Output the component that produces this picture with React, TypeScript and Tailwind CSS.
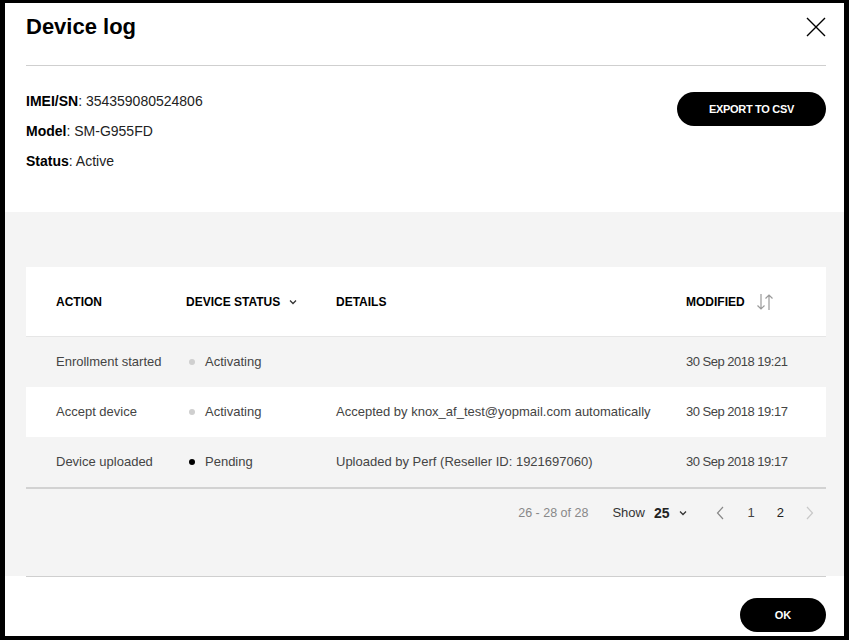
const FONT = { fontFamily: '"Liberation Sans", Arial, sans-serif' };

type Row = {
  action: string;
  status: string;
  pending: boolean;
  details: string;
  modified: string;
  shaded: boolean;
};

const ROWS: Row[] = [
  { action: 'Enrollment started', status: 'Activating', pending: false, details: '', modified: '30 Sep 2018 19:21', shaded: true },
  { action: 'Accept device', status: 'Activating', pending: false, details: 'Accepted by knox_af_test@yopmail.com automatically', modified: '30 Sep 2018 19:17', shaded: false },
  { action: 'Device uploaded', status: 'Pending', pending: true, details: 'Uploaded by Perf (Reseller ID: 1921697060)', modified: '30 Sep 2018 19:17', shaded: true },
];

const Chevron = ({ className }: { className?: string }) => (
  <svg width="8" height="6" viewBox="0 0 8 6" className={className}>
    <path d="M1 1.5 L4 4.5 L7 1.5" fill="none" stroke="currentColor" strokeWidth="1.3" />
  </svg>
);

const SortIcon = () => (
  <svg width="20" height="20" viewBox="0 0 20 20" className="text-[#9a9a9a]">
    {/* down arrow */}
    <path d="M6 2 V17 M2.5 13.5 L6 17 L9.5 13.5" fill="none" stroke="currentColor" strokeWidth="1.2" />
    {/* up arrow */}
    <path d="M14 18 V3 M10.5 6.5 L14 3 L17.5 6.5" fill="none" stroke="currentColor" strokeWidth="1.2" />
  </svg>
);

export default function App() {
  return (
    <div className="w-[849px] h-[640px] bg-black pt-[3px] pl-[5px] pr-[5px] pb-[4px]" style={FONT}>
      <div className="bg-white h-full flex flex-col">
        {/* Header */}
        <div className="flex items-center justify-between pl-[21px] pr-[18px] pt-[9px]">
          <h1 className="text-[22px] leading-[30px] font-bold text-black">Device log</h1>
          <svg width="20" height="20" viewBox="0 0 20 20" className="text-black">
            <path d="M1 1 L19 19 M19 1 L1 19" stroke="currentColor" strokeWidth="1.4" />
          </svg>
        </div>
        <div className="ml-[21px] mr-[18px] mt-[23px] h-px bg-[#cfcfcf]" />

        {/* Device info */}
        <div className="flex justify-between pl-[21px] pr-[18px] pt-[20px] pb-[36px]">
          <div className="text-[14px] leading-[30px] text-[#222]">
            <div><span className="font-bold text-black">IMEI/SN</span>: 354359080524806</div>
            <div><span className="font-bold text-black">Model</span>: SM-G955FD</div>
            <div><span className="font-bold text-black">Status</span>: Active</div>
          </div>
          <button className="mt-[6px] w-[149px] h-[34px] rounded-full bg-black text-white text-[11px] font-bold tracking-[-0.3px]">
            EXPORT TO CSV
          </button>
        </div>

        {/* Log table */}
        <div className="flex-1 bg-[#f4f4f4] pl-[21px] pr-[18px] pt-[55px]">
          <div className="bg-white">
            <div className="grid grid-cols-[130px_150px_350px_1fr] pl-[30px] h-[70px] items-center pt-[1px] border-b border-[#e6e6e6] text-[12px] font-bold text-black">
              <div>ACTION</div>
              <div className="flex items-center gap-[9px]">
                DEVICE STATUS
                <Chevron className="text-[#333]" />
              </div>
              <div>DETAILS</div>
              <div className="flex items-center gap-[10px]">
                MODIFIED
                <SortIcon />
              </div>
            </div>
            {ROWS.map((row) => (
              <div
                key={row.action}
                className={`grid grid-cols-[130px_150px_350px_1fr] pl-[30px] h-[50px] items-center text-[13px] text-[#444] ${row.shaded ? 'bg-[#f4f4f4]' : 'bg-white'}`}
              >
                <div>{row.action}</div>
                <div className="flex items-center">
                  <span className={`w-[6px] h-[6px] rounded-full ml-[3px] mr-[10px] ${row.pending ? 'bg-black' : 'bg-[#cfcfcf]'}`} />
                  {row.status}
                </div>
                <div className="whitespace-nowrap">{row.details}</div>
                <div className="tracking-[-0.5px]">{row.modified}</div>
              </div>
            ))}
          </div>
          <div className="h-[2px] bg-[#d2d2d2]" />

          {/* Pagination */}
          <div className="flex items-center justify-end h-[48px] pr-[12px] text-[13px]">
            <span className="text-[#888] text-[12.5px]">26 - 28 of 28</span>
            <span className="ml-[24px] text-[#333]">Show</span>
            <span className="ml-[9px] font-bold text-[#222] text-[14px]">25</span>
            <Chevron className="ml-[9px] text-[#333]" />
            <svg width="8" height="14" viewBox="0 0 8 14" className="ml-[29px] text-[#888]">
              <path d="M7 1 L1.5 7 L7 13" fill="none" stroke="currentColor" strokeWidth="1.2" />
            </svg>
            <span className="ml-[24px] text-[#444]">1</span>
            <span className="ml-[22px] text-[#222]">2</span>
            <svg width="8" height="14" viewBox="0 0 8 14" className="ml-[22px] text-[#c8c8c8]">
              <path d="M1 1 L6.5 7 L1 13" fill="none" stroke="currentColor" strokeWidth="1.2" />
            </svg>
          </div>
        </div>

        {/* Footer */}
        <div className="ml-[21px] mr-[18px] h-px bg-[#cfcfcf]" />
        <div className="flex justify-end pl-[21px] pr-[18px] pt-[21px] pb-[4px]">
          <button className="w-[86px] h-[34px] rounded-full bg-black text-white text-[11px] font-bold">OK</button>
        </div>
      </div>
    </div>
  );
}
